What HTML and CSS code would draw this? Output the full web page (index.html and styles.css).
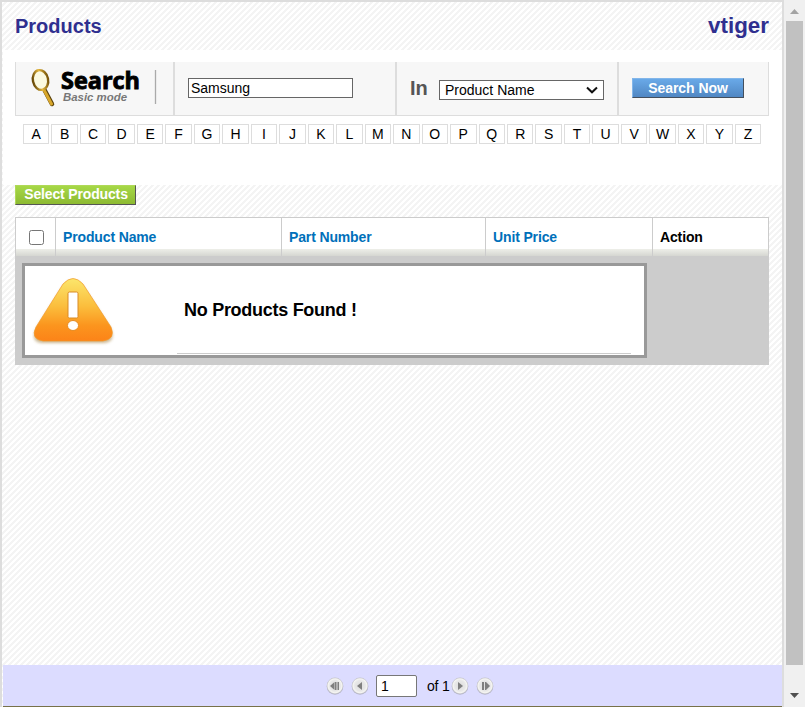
FILE: index.html
```html
<!DOCTYPE html>
<html lang="en">
<head>
<meta charset="utf-8">
<title>Products</title>
<link rel="stylesheet" href="styles.css">
</head>
<body>
<div class="window">
<main class="page">
  <header class="header"><h1>Products</h1><div class="brand">vtiger</div></header>
  <section class="search-area">
    <form class="search">
      <div class="cell logo-cell">
        <svg class="search-logo" width="145" height="52" viewBox="0 0 145 52">
          <defs><linearGradient id="gold"><stop offset="0" stop-color="#6b4c08"/><stop offset=".5" stop-color="#e5b840"/><stop offset="1" stop-color="#7a580c"/></linearGradient></defs>
          <path d="M28 27 36 42" stroke="#5b430c" stroke-width="4.500" stroke-linecap="round"/>
          <path d="M27.5 27 35.5 42" stroke="#d9a72b" stroke-width="3" stroke-linecap="round"/>
          <ellipse cx="24.5" cy="18" rx="7.6" ry="10" transform="rotate(-12 24.5 18)" fill="#fbfae0" stroke="url(#gold)" stroke-width="2.4"/>
          <text x="45" y="27" class="logo-title" textLength="79" lengthAdjust="spacingAndGlyphs">Search</text>
          <text x="47" y="39" class="logo-mode" textLength="64" lengthAdjust="spacingAndGlyphs">Basic mode</text>
          <path d="M139.500 8v34" stroke="#aaa" stroke-width="1.300"/>
        </svg>
      </div>
      <div class="cell term-cell"><input class="term" type="text" value="Samsung"></div>
      <div class="cell field-cell"><b class="in">In</b>
        <div class="select"><span>Product Name</span><svg width="12" height="8" viewBox="0 0 12 8"><path d="M1 1.500 6 6.300 11 1.500" fill="none" stroke="#111" stroke-width="2"/></svg></div>
      </div>
      <div class="cell action-cell"><button type="button" class="btn blue">Search Now</button></div>
    </form>
    <nav class="letters"><a>A</a><a>B</a><a>C</a><a>D</a><a>E</a><a>F</a><a>G</a><a>H</a><a>I</a><a>J</a><a>K</a><a>L</a><a>M</a><a>N</a><a>O</a><a>P</a><a>Q</a><a>R</a><a>S</a><a>T</a><a>U</a><a>V</a><a>W</a><a>X</a><a>Y</a><a>Z</a></nav>
  </section>
  <section class="results">
    <button type="button" class="btn green">Select Products</button>
    <div class="table">
      <div class="thead">
        <div class="th check"><input type="checkbox"></div><div class="th">Product Name</div><div class="th">Part Number</div><div class="th">Unit Price</div><div class="th plain">Action</div>
      </div>
      <div class="tbody">
        <div class="empty">
          <svg class="warning" width="84" height="74" viewBox="0 0 84 74">
            <defs>
              <linearGradient id="amber" x2="0" y2="1"><stop offset="0" stop-color="#fbe66c"/><stop offset=".45" stop-color="#fbbd3c"/><stop offset=".75" stop-color="#fb951e"/><stop offset="1" stop-color="#fc8318"/></linearGradient>
              <filter id="soft" x="-20%" y="-20%" width="140%" height="140%"><feGaussianBlur stdDeviation="1.600"/></filter>
            </defs>
            <path d="M32 9Q41 0 50 9L79 53Q84 66 72 67H10Q-2 66 4 53Z" fill="#a88646" opacity=".6" filter="url(#soft)"/>
            <path d="M31 8Q41-3 51 8L79 51Q84 63 71 65H11Q-2 63 4 51Z" fill="url(#amber)" stroke="#f29a2a" stroke-width=".7"/>
            <rect x="36" y="16" width="10" height="26" rx="1.500" fill="#fff" stroke="#d98b25"/>
            <ellipse cx="41" cy="49.500" rx="5.500" ry="5" fill="#fff" stroke="#e68b21"/>
          </svg>
          <div class="message">No Products Found !</div>
        </div>
      </div>
    </div>
  </section>
  <footer class="pager">
    <svg class="round first" viewBox="0 0 18 18"><use href="#disc"/><path d="M8.500 5v8L4 9ZM9 5h1.500v8H9ZM11.500 5H13v8h-1.500Z"/></svg>
    <svg class="round prev" viewBox="0 0 18 18"><use href="#disc"/><path d="M11 5v8L6 9Z"/></svg>
    <input class="page-number" type="text" value="1">
    <span class="count">of 1</span>
    <svg class="round next" viewBox="0 0 18 18"><use href="#disc"/><path d="M7 5v8l5-4Z"/></svg>
    <svg class="round last" viewBox="0 0 18 18"><use href="#disc"/><path d="M6 5h2v8H6ZM9 5h1v8H9ZM10 5v8l4-4Z"/></svg>
  </footer>
</main>
<aside class="scrollbar">
  <svg width="9" height="5" viewBox="0 0 9 5"><path d="M0 5 4.500 0 9 5Z" fill="#a3a3a3"/></svg>
  <div class="thumb"></div>
  <svg width="9" height="5" viewBox="0 0 9 5"><path d="M0 0h9L4.500 5Z" fill="#505050"/></svg>
</aside>
</div>
<svg width="0" height="0" class="symbols"><defs><radialGradient id="silver"><stop offset="0" stop-color="#ddd"/><stop offset=".65" stop-color="#e8e8e8"/><stop offset=".85" stop-color="#f5f5f2"/><stop offset="1" stop-color="#c2c2c8"/></radialGradient><g id="disc"><circle cx="9" cy="9.500" r="8.300" fill="#b6b6c8"/><circle cx="9" cy="8.800" r="8.200" fill="url(#silver)"/></g></defs></svg>
</body>
</html>
```
FILE: styles.css
```css
* { box-sizing: border-box; }
body { margin: 0; overflow: hidden; font-family: "Liberation Sans", Arial, sans-serif; font-size: 14px; color: #000; }
.window { display: flex; width: 805px; height: 707px; }
.page {
  width: 784px; display: flex; flex-direction: column;
  border: solid #ddd; border-width: 2px 2px 0;
  background: linear-gradient(135deg, #fff 25%, #f4f4f4 25% 50%, #fff 50% 75%, #f4f4f4 75%) 0 0 / 6px 6px;
}
.header { height: 48px; padding: 0 13px; display: flex; justify-content: space-between; align-items: center; color: #2f2f8f; font-weight: bold; }
h1 { margin: 0; font-size: 20px; }
.brand { font-size: 22.4px; }
.search-area { height: 135px; margin-left: 1px; padding: 12px 13px 0 12px; background: #fff; }
.search { display: flex; height: 54px; margin: 0; background: #f7f7f7; border: solid #ddd; border-width: 0 1px 1px; }
.cell { display: flex; border-right: 2px solid #ddd; }
.logo-cell { width: 159px; }
.term-cell { width: 222px; padding: 16px 0 0 13px; }
.field-cell { width: 222px; padding-left: 13px; }
.action-cell { flex: 1; border: 0; padding: 16px 0 0 13px; }
.search-logo { display: block; }
.logo-title { font: bold 23px "Open Sans", sans-serif; stroke: #000; stroke-width: .9; }
.logo-mode { font: italic bold 11px "Liberation Sans", sans-serif; fill: #777; }
.term { width: 165px; height: 20px; margin: 0; padding: 0 2px; border: 1px solid #666; border-radius: 0; font: 14px "Liberation Sans", sans-serif; }
.in { width: 29px; padding-top: 14px; font-size: 20px; line-height: 24px; color: #555; }
.select { display: flex; justify-content: space-between; align-items: center; width: 165px; height: 20px; margin-top: 18px; padding: 0 5px; border: 1px solid #666; background: #fff; }
.btn { display: block; margin: 0; padding: 0; border-radius: 0; color: #fff; font: bold 14px/18px "Liberation Sans", sans-serif; }
.blue { width: 112px; height: 20px; border: 1px solid; border-color: #82b6ea #444f5d #444f5d #82b6ea; background: linear-gradient(#69a9e8, #5087c3); letter-spacing: -.05px; }
.green { width: 121px; height: 20px; padding-bottom: 2px; border: 1px solid; border-color: #b0d957 #555 #555 #b0d957; background: linear-gradient(#a6d847, #8dba32); line-height: 16px; letter-spacing: -.15px; text-indent: 1px; }
.letters { display: flex; gap: 2px; margin: 8px 8px 0; }
.letters a { flex: 1; height: 20px; border: 1px solid #ddd; text-align: center; line-height: 19px; }
.results { flex: 1; padding: 0 13px; }
.table { margin-top: 12px; border: 1px solid #ccc; border-bottom: 0; }
.thead { display: grid; grid-template-columns: 40px 226px 204px 167px 1fr; height: 38px; background: linear-gradient(#fff 0 31px, #eeefe9 31px, #d5d6d1 38px); }
.th { padding-left: 7px; border-right: 1px solid #ccc; color: #0070ba; font-size: 14px; letter-spacing: -.14px; font-weight: bold; line-height: 38px; }
.th:last-child { border: 0; }
.plain { color: #000; }
.check input { display: block; width: 15px; height: 15px; margin: 12px 0 0 6px; }
.tbody { height: 109px; padding: 7px 0 0 6px; background: #ccc; }
.empty { display: flex; width: 625px; height: 95px; border: 3px solid #999; background: #fff; padding: 10px 13px 1px 7px; }
.message { margin-left: 61px; flex: 1; padding: 23px 7px 0; border-bottom: 1px solid #ccc; font-size: 18px; letter-spacing: -.28px; font-weight: bold; line-height: 22px; }
.pager { display: flex; align-items: center; height: 42px; margin-left: 1px; padding-left: 323px; background: #dcdcff; border-bottom: 1px solid #77714a; }
.round { width: 18px; height: 18px; fill: #7f7f7f; }
.prev { margin-left: 7px; }
.page-number { width: 41px; height: 22px; margin: 0 0 0 7px; padding: 0 4px; border: 1px solid #777; border-radius: 2px; font: 14px "Liberation Sans", sans-serif; }
.count { width: 24px; margin-left: 10px; white-space: nowrap; letter-spacing: -.2px; }
.last { margin-left: 7px; }
.scrollbar { width: 21px; display: flex; flex-direction: column; align-items: center; padding: 9px 0 9px; background: #f0f0f0; justify-content: space-between; }
.thumb { width: 17px; height: 644px; margin: 7px 0 28px; background: #c1c1c1; }
.symbols { position: absolute; }
```
